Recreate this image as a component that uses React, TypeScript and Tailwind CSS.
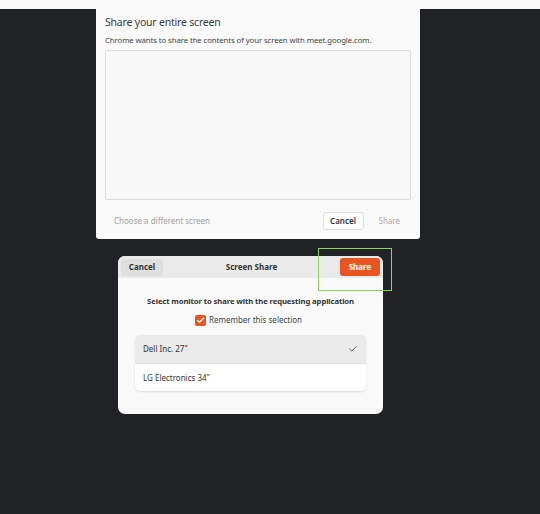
import { Check } from "lucide-react";

const font = { fontFamily: '"Noto Sans", "Open Sans", sans-serif' };

function ChromePicker() {
  return (
    <div className="ml-[96px] flex h-[230px] w-[324px] flex-col rounded-b-[3px] bg-[#fafafa] px-[9px]">
      <div className="mt-[5px] text-[10.5px] leading-[16px] tracking-[-0.2px] text-[#3a3a3a]">
        Share your entire screen
      </div>
      <div className="mt-[4px] text-[7.8px] leading-[12px] tracking-[-0.1px] text-[#444]">
        Chrome wants to share the contents of your screen with meet.google.com.
      </div>
      <div className="mt-[4px] h-[150px] w-[306px] rounded-[2px] border border-[#dcdcdc] bg-[#f8f8f8]" />
      <div className="mt-[12px] flex items-center">
        <span className="ml-[9px] text-[8px] text-[#a0a0a0]">
          Choose a different screen
        </span>
        <button className="ml-auto flex h-[18px] w-[41px] items-center justify-center rounded-[3px] border border-[#dedede] bg-white text-[8px] font-semibold text-[#333]">
          Cancel
        </button>
        <span className="ml-[15px] mr-[11px] text-[8px] text-[#a8a8a8]">
          Share
        </span>
      </div>
    </div>
  );
}

function PortalDialog() {
  return (
    <div className="ml-[118px] mt-[17px] flex h-[158px] w-[265px] flex-col overflow-hidden rounded-[7px] bg-[#fafafa]">
      <div className="flex h-[22px] items-center bg-[#ebebeb] px-[3px]">
        <button className="flex h-[17px] w-[42px] items-center justify-center rounded-[3px] bg-[#dfdfdf] text-[8px] font-bold text-[#333]">
          Cancel
        </button>
        <div className="flex-1 text-center text-[8px] font-bold text-[#333]">
          Screen Share
        </div>
        <button className="flex h-[18px] w-[40px] items-center justify-center rounded-[3px] bg-[#e95420] text-[8px] font-bold text-white">
          Share
        </button>
      </div>
      <div className="mt-[17px] text-center text-[7.7px] font-bold leading-[12px] tracking-[-0.1px] text-[#333]">
        Select monitor to share with the requesting application
      </div>
      <div className="mt-[7px] flex items-center justify-center gap-[3px] pr-[4px]">
        <span className="flex h-[11px] w-[11px] items-center justify-center rounded-[2px] bg-[#e95420]">
          <Check className="h-[9px] w-[9px] text-white" strokeWidth={3.5} />
        </span>
        <span className="text-[8px] leading-[12px] text-[#444]">
          Remember this selection
        </span>
      </div>
      <div className="mx-[17px] mt-[9px] overflow-hidden rounded-[5px] bg-white shadow-[0_1px_2px_rgba(0,0,0,0.12)]">
        <div className="flex h-[28px] items-center bg-[#ebebeb] pl-[8px] pr-[8px] text-[8px] text-[#333]">
          Dell Inc. 27"
          <Check className="ml-auto h-[10px] w-[10px] text-[#555]" strokeWidth={2.2} />
        </div>
        <div className="flex h-[28px] items-center border-t border-[#e2e2e2] pl-[8px] text-[8px] text-[#333]">
          LG Electronics 34"
        </div>
      </div>
    </div>
  );
}

export default function App() {
  return (
    <div
      className="relative h-[514px] w-[540px] overflow-hidden border-t-[9px] border-[#fafafa] bg-[#212225]"
      style={font}
    >
      <ChromePicker />
      <PortalDialog />
      {/* highlight annotation */}
      <div className="absolute left-[318px] top-[239px] h-[43px] w-[74px] border border-[#8ad35e]" />
    </div>
  );
}
